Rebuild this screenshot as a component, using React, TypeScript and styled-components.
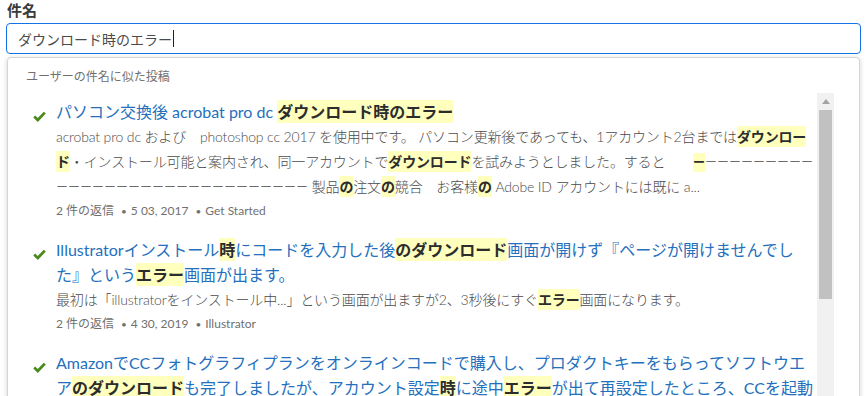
import React from "react";
import styled, { createGlobalStyle } from "styled-components";

const Global = createGlobalStyle`
  html, body { margin: 0; padding: 0; overflow: hidden; background: #fff; }
  body { font-family: "Lato", "Noto Sans CJK JP", sans-serif; }
`;

const Page = styled.div`
  padding: 0 6px;
  height: 396px;
  overflow: hidden;
`;

const Label = styled.div`
  font-family: "Noto Sans CJK JP", sans-serif;
  font-weight: 700;
  font-size: 15px;
  line-height: 20px;
  color: #3a3a3a;
  padding-left: 1px;
  margin-bottom: 3px;
`;

const InputBox = styled.div`
  height: 31px;
  box-sizing: border-box;
  border: 1px solid #1473e6;
  border-radius: 4px;
  display: flex;
  align-items: center;
  padding-left: 11px;
  font-family: "Noto Sans CJK JP", sans-serif;
  font-size: 14px;
  color: #4b4b4b;
`;

const Caret = styled.span`
  display: inline-block;
  width: 1px;
  height: 17px;
  background: #222;
  margin-left: 1px;
`;

const Panel = styled.div`
  margin: 3px 1px 0 1px;
  border: 1px solid #d6d6d6;
  border-radius: 4px;
  box-shadow: 0 1px 5px rgba(0, 0, 0, 0.18);
  background: #fff;
  height: 360px;
  display: flex;
  flex-direction: column;
  overflow: hidden;
`;

const PanelHeader = styled.div`
  font-family: "Noto Sans CJK JP", sans-serif;
  font-size: 12px;
  line-height: 16px;
  color: #707070;
  padding: 10px 0 0 18px;
  height: 24px;
`;

const BodyRow = styled.div`
  display: flex;
  flex: 1;
  min-height: 0;
  padding-top: 1px;
`;

const List = styled.div`
  flex: 1;
  padding: 6px 3px 0 25px;
  overflow: hidden;
`;

const Item = styled.div`
  display: flex;
  margin-bottom: 16px;
`;

const CheckCol = styled.div`
  width: 23px;
  flex-shrink: 0;
  padding-top: 7px;
`;

const Content = styled.div`
  flex: 1;
  min-width: 0;
`;

const Title = styled.div`
  font-size: 16px;
  line-height: 25px;
  color: #2470bd;
  font-family: "Lato", "Noto Sans CJK JP", sans-serif;
`;

const Excerpt = styled.div`
  font-size: 14px;
  line-height: 25px;
  color: #4b4b4b;
  font-weight: 300;
  letter-spacing: -0.15px;
  font-family: "Lato", "Noto Sans CJK JP", sans-serif;
`;

const Meta = styled.div`
  font-size: 12px;
  line-height: 20px;
  color: #707070;
  margin-top: 2px;
  font-family: "Lato", "Noto Sans CJK JP", sans-serif;
`;

const Dot = styled.span`
  margin: 0 4px 0 7px;
  font-size: 10px;
`;

const Hl = styled.mark`
  background: #ffffbe;
  color: #2c2c2c;
  font-weight: 700;
  padding: 2px 0;
`;

const Dashes = styled.span`
  font-size: 12px;
  line-height: 0;
  letter-spacing: 0;
`;

const Scroll = styled.div`
  width: 17px;
  margin-right: 25px;
  background: #f1f1f1;
  display: flex;
  flex-direction: column;
  align-items: center;
`;

const ArrowBtn = styled.div`
  height: 17px;
  width: 17px;
  display: flex;
  align-items: center;
  justify-content: center;
`;

const Thumb = styled.div`
  width: 13px;
  height: 189px;
  background: #c1c1c1;
`;

const Check = () => (
  <svg width="13" height="11" viewBox="0 0 13 11">
    <path d="M1.2 5.6 L4.8 9 L11.8 1.6" fill="none" stroke="#4a8a1c" strokeWidth="2.8" />
  </svg>
);

const dashes = "ー".repeat(30);

export default function App() {
  return (
    <Page>
      <Global />
      <Label>件名</Label>
      <InputBox>
        ダウンロード時のエラー
        <Caret />
      </InputBox>
      <Panel>
        <PanelHeader>ユーザーの件名に似た投稿</PanelHeader>
        <BodyRow>
          <List>
            <Item>
              <CheckCol><Check /></CheckCol>
              <Content>
                <Title>
                  パソコン交換後 acrobat pro dc <Hl>ダウンロード時のエラー</Hl>
                </Title>
                <Excerpt>
                  {"acrobat pro dc および\u3000photoshop cc 2017 を使用中です。 パソコン更新後であっても、1アカウント2台までは"}
                  <Hl>ダウンロード</Hl>・インストール可能と案内され、同一アカウントで<Hl>ダウンロード</Hl>
                  {"を試みようとしました。すると\u3000\u3000"}
                  <Dashes>
                    <Hl>ー</Hl>
                    {dashes}
                  </Dashes>
                  {" 製品"}
                  <Hl>の</Hl>注文<Hl>の</Hl>
                  {"競合\u3000お客様"}
                  <Hl>の</Hl>
                  {" Adobe ID アカウントには既に a..."}
                </Excerpt>
                <Meta>
                  2 件の返信<Dot>•</Dot>5 03, 2017<Dot>•</Dot>Get Started
                </Meta>
              </Content>
            </Item>
            <Item>
              <CheckCol><Check /></CheckCol>
              <Content>
                <Title>
                  Illustratorインストール<Hl>時</Hl>にコードを入力した後<Hl>のダウンロード</Hl>
                  画面が開けず『ページが開けませんでした』という<Hl>エラー</Hl>画面が出ます。
                </Title>
                <Excerpt>
                  最初は「illustratorをインストール中...」という画面が出ますが2、3秒後にすぐ<Hl>エラー</Hl>画面になります。
                </Excerpt>
                <Meta>
                  2 件の返信<Dot>•</Dot>4 30, 2019<Dot>•</Dot>Illustrator
                </Meta>
              </Content>
            </Item>
            <Item>
              <CheckCol><Check /></CheckCol>
              <Content>
                <Title>
                  AmazonでCCフォトグラフィプランをオンラインコードで購入し、プロダクトキーをもらってソフトウエア
                  <Hl>のダウンロード</Hl>も完了しましたが、アカウント設定<Hl>時</Hl>に途中<Hl>エラー</Hl>
                  が出て再設定したところ、CCを起動しても動作しません。
                </Title>
              </Content>
            </Item>
          </List>
          <Scroll>
            <ArrowBtn>
              <svg width="8" height="5" viewBox="0 0 8 5">
                <path d="M0 5 L4 0 L8 5 Z" fill="#a3a3a3" />
              </svg>
            </ArrowBtn>
            <Thumb />
          </Scroll>
        </BodyRow>
      </Panel>
    </Page>
  );
}
